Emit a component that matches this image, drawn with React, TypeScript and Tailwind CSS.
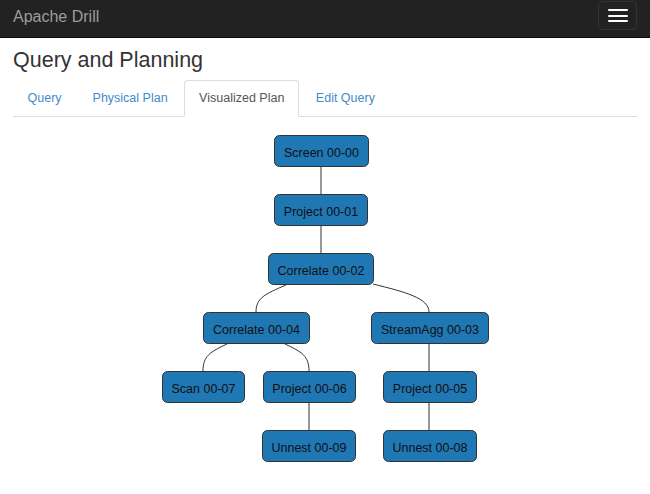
import React from "react";

type PlanNode = { id: string; label: string; x: number; y: number; w: number };

const nodes: PlanNode[] = [
  { id: "00-00", label: "Screen 00-00", x: 274, y: 135, w: 94 },
  { id: "00-01", label: "Project 00-01", x: 274, y: 194, w: 93 },
  { id: "00-02", label: "Correlate 00-02", x: 268, y: 253, w: 105 },
  { id: "00-04", label: "Correlate 00-04", x: 203, y: 312, w: 106 },
  { id: "00-03", label: "StreamAgg 00-03", x: 371, y: 312, w: 117 },
  { id: "00-07", label: "Scan 00-07", x: 162, y: 371, w: 82 },
  { id: "00-06", label: "Project 00-06", x: 263, y: 371, w: 92 },
  { id: "00-05", label: "Project 00-05", x: 383, y: 371, w: 93 },
  { id: "00-09", label: "Unnest 00-09", x: 262, y: 430, w: 93 },
  { id: "00-08", label: "Unnest 00-08", x: 383, y: 430, w: 93 },
];

const edges = [
  "M321,167 L321,194",
  "M321,226 L321,253",
  "M286,285 C265,294 256,298 256,312",
  "M373,284 C405,292 429,298 429,312",
  "M227,344 C210,352 203,356 203,371",
  "M285,344 C302,352 309,356 309,371",
  "M429,344 L429,371",
  "M309,403 L309,430",
  "M429,403 L429,430",
];

const tabs = ["Query", "Physical Plan", "Visualized Plan", "Edit Query"];

const PlanGraph = () => (
  <svg
    className="block"
    width={650}
    height={377}
    viewBox="0 117 650 377"
    style={{ fontFamily: '"Liberation Sans", Arial, sans-serif' }}
  >
    {edges.map((d, i) => (
      <path key={i} d={d} fill="none" stroke="#333" strokeWidth={1} />
    ))}
    {nodes.map((n) => (
      <g key={n.id}>
        <rect
          x={n.x + 0.5}
          y={n.y + 0.5}
          width={n.w}
          height={31}
          rx={5}
          fill="#1f77b4"
          stroke="#333"
          strokeWidth={1}
        />
        <text
          x={n.x + n.w / 2 + 0.5}
          y={n.y + 22}
          textAnchor="middle"
          fontSize={12.5}
          fill="#111"
        >
          {n.label}
        </text>
      </g>
    ))}
  </svg>
);

export default function App() {
  return (
    <div className="w-[650px] h-[494px] bg-white overflow-hidden font-['Liberation_Sans',Arial,sans-serif] text-[#333]">
      <nav className="h-[38px] bg-[#222] border-b border-[#080808] flex justify-between px-[13px]">
        <span className="text-[16px] text-[#9d9d9d] leading-[36px] -mt-[1px]">Apache Drill</span>
        <button className="mt-[1px] w-[39px] h-[29px] border border-[#333] rounded-[4px] flex flex-col items-center justify-center gap-[3.5px]">
          <span className="block w-[20px] h-[2px] rounded-[1px] bg-white" />
          <span className="block w-[20px] h-[2px] rounded-[1px] bg-white" />
          <span className="block w-[20px] h-[2px] rounded-[1px] bg-white" />
        </button>
      </nav>
      <div className="px-[13px]">
        <h1 className="mt-[10px] mb-[8px] text-[21.5px] leading-[24px] font-normal">Query and Planning</h1>
        <ul className="flex border-b border-[#ddd]">
          {tabs.map((t) => {
            const active = t === "Visualized Plan";
            return (
              <li key={t} className="-mb-px mr-[2px]">
                <a
                  className={
                    active
                      ? "block px-[14px] pt-[8px] pb-[9px] leading-[18px] text-[12.5px] text-[#555] bg-white border border-[#ddd] border-b-transparent rounded-t-[4px]"
                      : "block px-[13.5px] pt-[8px] pb-[9px] leading-[18px] text-[12.5px] text-[#428bca] border border-transparent rounded-t-[4px]"
                  }
                >
                  {t}
                </a>
              </li>
            );
          })}
        </ul>
      </div>
      <PlanGraph />
    </div>
  );
}
